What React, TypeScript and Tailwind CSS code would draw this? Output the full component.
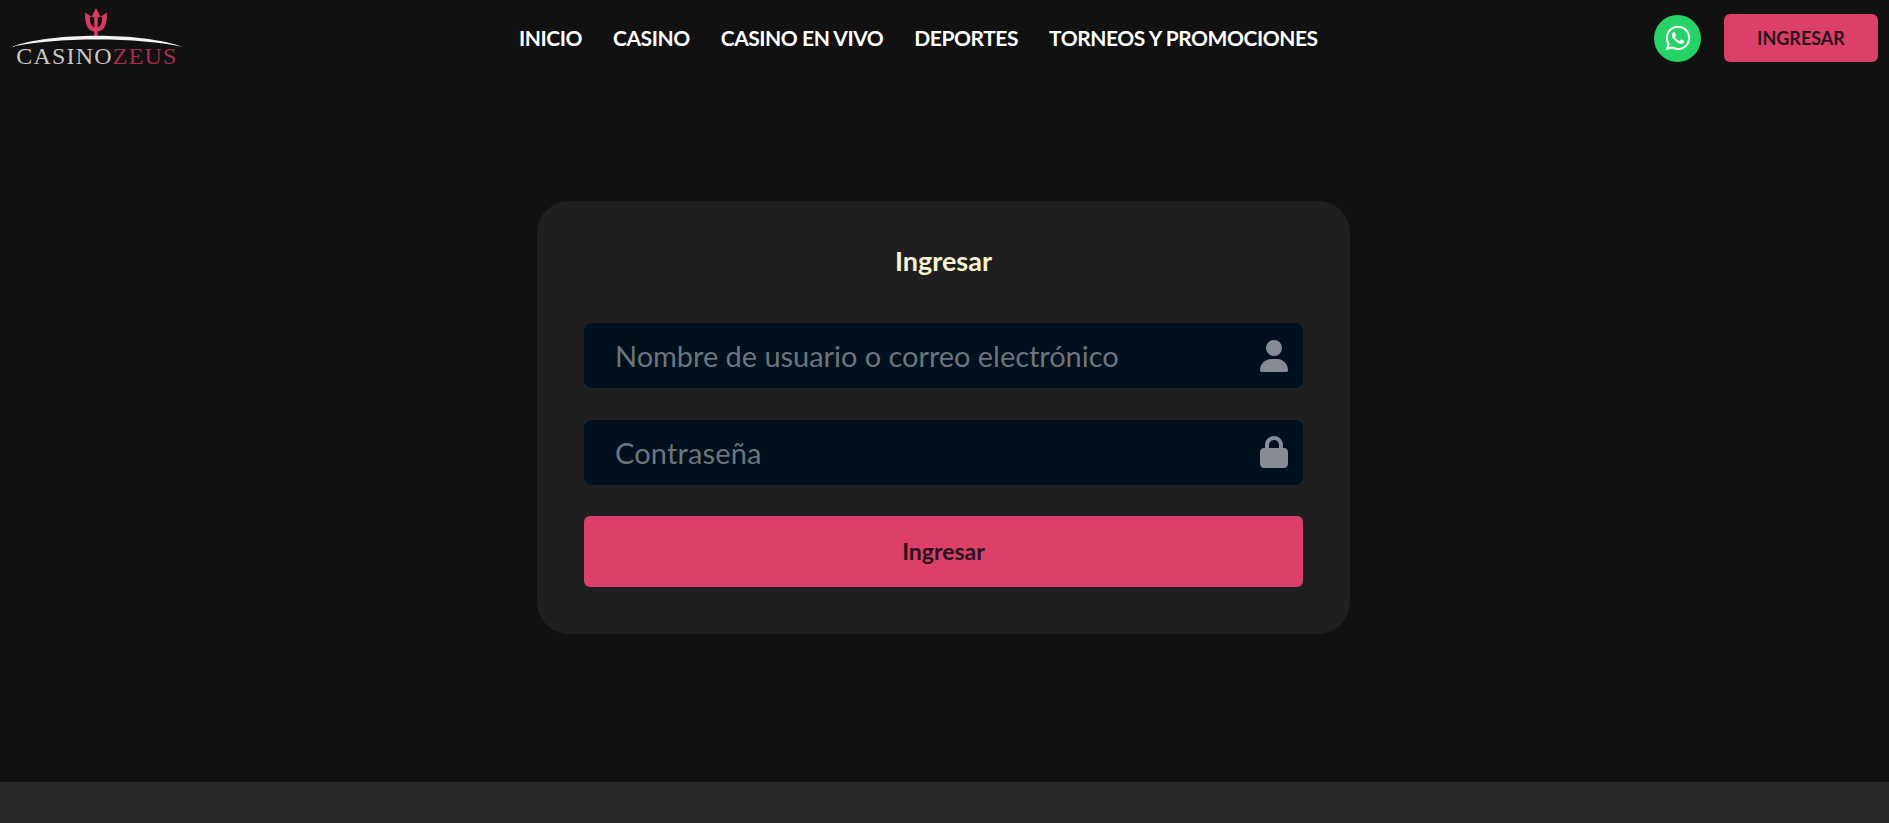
import { FaUser, FaLock, FaWhatsapp } from "react-icons/fa6";

const font = "font-['Lato','Open_Sans',sans-serif]";

function Logo() {
  return (
    <div className="w-[172px] h-[66px] ml-[11px] flex flex-col items-center shrink-0">
      <svg width="172" height="46" viewBox="0 0 172 46" className="shrink-0">
        <path d="M85 3 L80.5 12 H89.5 Z" fill="#d63a60" />
        <path d="M85 10 V31" stroke="#d63a60" strokeWidth="3.6" fill="none" />
        <path d="M76.5 11 C76.5 19 78 24.5 85 24.5 C92 24.5 93.5 19 93.5 11" stroke="#d63a60" strokeWidth="4.6" fill="none" />
        <path d="M74 7.5 L80.5 11.5 L74.5 15 Z" fill="#d63a60" />
        <path d="M96 7.5 L89.5 11.5 L95.5 15 Z" fill="#d63a60" />
        <path d="M0 42 C40 27 132 27 172 42 C130 32 42 32 0 42 Z" fill="#f4f4f4" />
      </svg>
      <div className="font-['Liberation_Serif',serif] text-[24px] leading-[18px] mt-[-4px] tracking-[1.2px] whitespace-nowrap text-[#c9c9c9]">
        CASINO<span className="text-[#a92c4e]">ZEUS</span>
      </div>
    </div>
  );
}

export default function App() {
  return (
    <div className={`min-h-screen flex flex-col bg-[#111111] ${font}`}>
      <header className="h-[76px] flex items-center shrink-0">
        <Logo />
        <nav className="ml-[336px] flex gap-[31px] text-white font-bold text-[21px] tracking-[-0.45px] whitespace-nowrap">
          <a>INICIO</a>
          <a>CASINO</a>
          <a>CASINO EN VIVO</a>
          <a>DEPORTES</a>
          <a>TORNEOS Y PROMOCIONES</a>
        </nav>
        <div className="ml-auto mr-[11px] flex items-center gap-[23px]">
          <div className="w-[47px] h-[47px] rounded-full bg-[#25d366] flex items-center justify-center text-white">
            <FaWhatsapp className="w-[28px] h-[28px]" />
          </div>
          <button className="w-[154px] h-[48px] rounded-[6px] bg-[#dc3f67] text-[#2a1320] font-bold text-[18px]">INGRESAR</button>
        </div>
      </header>
      <main className="flex-1 flex justify-center items-start pt-[125px] pr-[2px]">
        <form className="w-[813px] h-[433px] rounded-[32px] bg-[#1f1f1f] px-[47px] pt-[45px] flex flex-col">
          <h1 className="text-center text-[27px] leading-[30px] font-bold text-[#f7f2d3]">Ingresar</h1>
          <div className="relative mt-[47px]">
            <input placeholder="Nombre de usuario o correo electrónico" className="w-full h-[65px] rounded-[8px] bg-[#00101c] pl-[31px] pr-[60px] text-[29px] tracking-[-0.05px] text-white placeholder:text-[#6c757d] outline-none" />
            <FaUser className="absolute right-[15px] top-[17px] w-[28px] h-[32px] text-[#868b94]" />
          </div>
          <div className="relative mt-[32px]">
            <input placeholder="Contraseña" className="w-full h-[65px] rounded-[8px] bg-[#00101c] pl-[31px] pr-[60px] text-[29px] tracking-[0.15px] text-white placeholder:text-[#6c757d] outline-none" />
            <FaLock className="absolute right-[15px] top-[16px] w-[28px] h-[32px] text-[#868b94]" />
          </div>
          <button type="button" className="mt-[31px] h-[71px] rounded-[6px] bg-[#dc3f67] text-[#2a1320] font-bold text-[23px]">Ingresar</button>
        </form>
      </main>
      <footer className="h-[41px] shrink-0 bg-[#282828]" />
    </div>
  );
}
